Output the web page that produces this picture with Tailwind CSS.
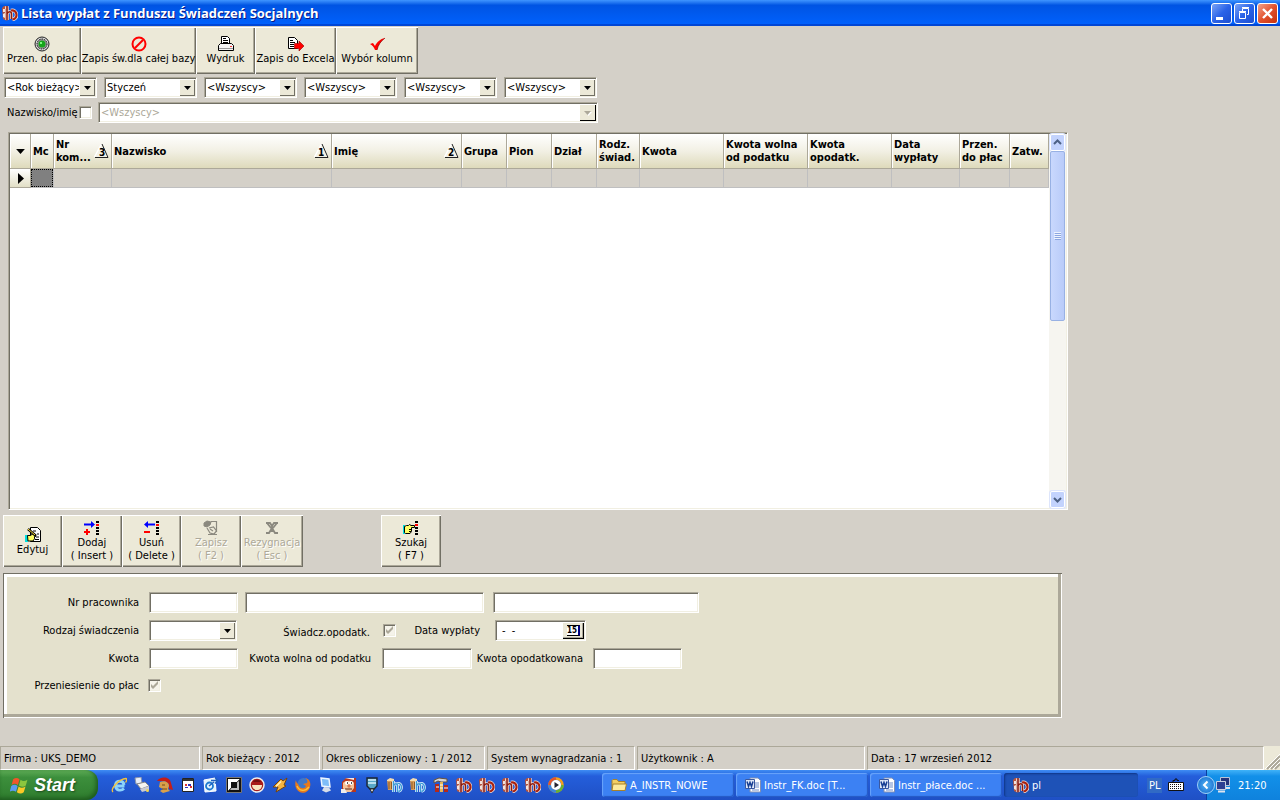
<!DOCTYPE html>
<html lang="pl">
<head>
<meta charset="utf-8">
<title>Lista wypłat z Funduszu Świadczeń Socjalnych</title>
<script src="https://cdn.jsdelivr.net/npm/@tailwindcss/browser@4"></script>
</head>
<body class="flex min-h-screen flex-col bg-[#d4d0c8] font-['DejaVu_Sans_Condensed','DejaVu_Sans',sans-serif] text-[11px] leading-[13px] text-black">

<svg class="hidden" aria-hidden="true">
  <symbol id="app" viewBox="0 0 16 16">
    <path d="M0 3l2-2h3l2 2v12l-3 .5L1 14z" fill="#b5543f"/><path d="M1 4h2v3H1zM1 9l2-1v5l-2-1z" fill="#f3e3dc"/><path d="M3 2h2v2H3z" fill="#f0b8a8"/>
    <path d="M5 1v14M5 9c1-3 4.500-3 4.500 0v5" fill="none" stroke="#f3e6e0" stroke-width="3.200"/>
    <path d="M9 5.500c6-1.500 8 8 1.500 9" fill="none" stroke="#f3e6e0" stroke-width="3.600"/>
    <path d="M5 1v14M5 9c1-3 4.500-3 4.500 0v5" fill="none" stroke="#8c1c10" stroke-width="1.600"/>
    <path d="M9 5.500c6-1.500 8 8 1.500 9" fill="none" stroke="#a8210f" stroke-width="2.200"/>
  </symbol>
  <symbol id="bin" viewBox="0 0 16 16">
    <path d="M0 3h7l-1 10H1z" fill="#d99a55"/><path d="M0 3l3-2 4 1v2H0z" fill="#f5dcae"/><path d="M2 5v7M4.500 5v7" stroke="#8c5a28"/>
    <path d="M6.500 4v11M6.500 9c1-3 4-3 4 0v6M10.500 6.500c5-1 5 7 1 8" fill="none" stroke="#e9f6ff" stroke-width="2.800"/>
    <path d="M6.500 4v11M6.500 9c1-3 4-3 4 0v6M10.500 6.500c5-1 5 7 1 8" fill="none" stroke="#3d9ad6" stroke-width="1.400"/>
  </symbol>
  <symbol id="word" viewBox="0 0 16 16">
    <path d="M5 1h8l2.500 2.500V15H5z" fill="#fff" stroke="#7f8fb5"/><path d="M10 6h4M10 8h4M10 10h4M7 13h7" stroke="#6d8bc8"/>
    <path d="M.5 2.500h9v9h-9z" fill="#dfe8f8" stroke="#3a58a0"/><path d="M2 4.500l1.500 5L5 5.500l1.500 4 1.500-5" fill="none" stroke="#173f94" stroke-width="1.500"/>
  </symbol>
  <symbol id="dots" viewBox="0 0 16 16">
    <path d="M12 1h3v2h-3zM12 7h3v2h-3zM12 10h3v2h-3zM12 13h3v2h-3z" fill="#000"/><path d="M12 4h3v2h-3z" fill="#f00"/>
  </symbol>
  <symbol id="sort" viewBox="0 0 15 16">
    <path d="M8 1l6 13.500H1z" fill="#f4f2e6"/><path d="M.5 14L7.500 1" stroke="#fff" stroke-width="1.500"/><path d="M8 1l6 13.500H1" fill="none" stroke="#222"/>
  </symbol>
  <symbol id="check" viewBox="0 0 13 13"><path d="M3 5v3l2 2 5-5V2L5 7z" fill="#aca899"/></symbol>
  <symbol id="down" viewBox="0 0 7 4"><path d="M0 0h7L3.500 4z"/></symbol>
</svg>

<!-- Window caption -->
<header class="flex h-[26px] shrink-0 items-center bg-linear-to-b from-[#3f95ff] via-[#0054e3] via-20% to-[#0062ff] pl-[2px] pr-[2px] shadow-[inset_0_-2px_#0046d5]">
  <svg class="size-4 shrink-0"><use href="#app"/></svg>
  <h1 class="ml-[3px] flex-1 truncate font-['Open_Sans','Noto_Sans',sans-serif] text-[13px] leading-5 font-bold text-white [text-shadow:1px_1px_#0a1883]">Lista wypłat z Funduszu Świadczeń Socjalnych</h1>
  <div class="flex gap-[2px]">
    <button aria-label="Minimalizuj" class="size-[21px] rounded-[3px] border border-white bg-linear-to-br from-[#7ba2f5] via-[#2b63e8] to-[#1d4ed0]"><svg viewBox="0 0 19 19"><path d="M4 13h7v3H4z" fill="#fff"/></svg></button>
    <button aria-label="Przywróć" class="size-[21px] rounded-[3px] border border-white bg-linear-to-br from-[#7ba2f5] via-[#2b63e8] to-[#1d4ed0]"><svg viewBox="0 0 19 19" fill="none" stroke="#fff"><path d="M4.500 8.500h6v6h-6zM4 7.500h7M7.500 7V4.500h6v6H12M7 3.500h7"/></svg></button>
    <button aria-label="Zamknij" class="size-[21px] rounded-[3px] border border-white bg-linear-to-br from-[#f0a088] via-[#e2512c] to-[#c73008]"><svg viewBox="0 0 19 19"><path d="M5 5l9 9M14 5l-9 9" stroke="#fff" stroke-width="2.400"/></svg></button>
  </div>
</header>

<main class="flex flex-1 flex-col">
  <!-- Toolbar -->
  <div class="flex h-[48px] pl-[3px] pt-px whitespace-nowrap">
    <button class="flex w-[78px] flex-col items-center bg-[#ece9d8] pt-[9px] shadow-[inset_1px_1px_#fff,inset_-1px_-1px_#716f64,inset_-2px_-2px_#aca899]">
      <svg class="size-4" viewBox="0 0 16 16"><circle cx="8" cy="8" r="7" fill="#d8d8d8" stroke="#222"/><circle cx="8" cy="8" r="5" fill="#999" stroke="#111" stroke-dasharray="1.500 1"/><circle cx="8" cy="8" r="3.500" fill="#17a51c"/><path d="M6 6h2v2H6z" fill="#7dfa7d"/></svg>Przen. do płac</button>
    <button class="flex w-[115px] flex-col items-center bg-[#ece9d8] pt-[9px] shadow-[inset_1px_1px_#fff,inset_-1px_-1px_#716f64,inset_-2px_-2px_#aca899]">
      <svg class="size-4" viewBox="0 0 16 16" fill="none" stroke="#f00" stroke-width="2"><circle cx="8" cy="8" r="6.500"/><path d="M12 4l-8 8"/></svg>Zapis św.dla całej bazy</button>
    <button class="flex w-[59px] flex-col items-center bg-[#ece9d8] pt-[9px] shadow-[inset_1px_1px_#fff,inset_-1px_-1px_#716f64,inset_-2px_-2px_#aca899]">
      <svg class="size-4" viewBox="0 0 16 16"><path d="M3.500 8V.5h6l2 2V8" fill="#fff" stroke="#000"/><path d="M5 2.500h3M5 4.500h5M5 6.500h5" stroke="#000"/><path d="M2.500 7.500h11l2 2v5H.5v-5z" fill="#f4f4f4" stroke="#000"/><path d="M3 7.500h10" stroke="#000"/><path d="M1 12.500h14" stroke="#999"/><path d="M12 10h2v1h-2z" fill="#f33"/></svg>Wydruk</button>
    <button class="flex w-[81px] flex-col items-center bg-[#ece9d8] pt-[9px] shadow-[inset_1px_1px_#fff,inset_-1px_-1px_#716f64,inset_-2px_-2px_#aca899]">
      <svg class="size-4" viewBox="0 0 16 16"><path d="M.5 1.500h6l3 3v8h-9z" fill="#fff" stroke="#000"/><path d="M2 4.500h3M2 6.500h5M2 8.500h4M2 10.500h4" stroke="#000"/><path d="M6.500 7.500H11V5l5 5-5 5v-2.500H6.500z" fill="#f00" stroke="#900" stroke-width=".6"/></svg>Zapis do Excela</button>
    <button class="flex w-[82px] flex-col items-center bg-[#ece9d8] pt-[9px] shadow-[inset_1px_1px_#fff,inset_-1px_-1px_#716f64,inset_-2px_-2px_#aca899]">
      <svg class="size-4" viewBox="0 0 16 16"><path d="M1 8l3-1 2 3c2-4 5-7 10-8-4 3-7 7-8 12H6C5 11 3 9 1 8z" fill="#f00"/><path d="M8 14c1-5 4-9 8-12" fill="none" stroke="#800" stroke-width=".7"/></svg>Wybór kolumn</button>
  </div>

  <!-- Filters -->
  <div class="mt-[3px] flex gap-[7px] pl-1">
    <div class="relative h-[21px] w-[93px]"><select aria-label="Rok" class="h-full w-full appearance-none border border-t-[#aca899] border-l-[#aca899] border-r-white border-b-white bg-white pl-[2px] pr-[17px] shadow-[inset_1px_1px_#716f64,inset_-1px_-1px_#f1efe2]"><option>&lt;Rok bieżący&gt;</option></select><span class="pointer-events-none absolute top-[2px] right-[2px] grid h-[17px] w-4 place-items-center bg-[#ece9d8] shadow-[inset_1px_1px_#fff,inset_-1px_-1px_#716f64]"><svg class="h-1 w-[7px]"><use href="#down"/></svg></span></div>
    <div class="relative h-[21px] w-[93px]"><select aria-label="Miesiąc" class="h-full w-full appearance-none border border-t-[#aca899] border-l-[#aca899] border-r-white border-b-white bg-white pl-[2px] pr-[17px] shadow-[inset_1px_1px_#716f64,inset_-1px_-1px_#f1efe2]"><option>Styczeń</option></select><span class="pointer-events-none absolute top-[2px] right-[2px] grid h-[17px] w-4 place-items-center bg-[#ece9d8] shadow-[inset_1px_1px_#fff,inset_-1px_-1px_#716f64]"><svg class="h-1 w-[7px]"><use href="#down"/></svg></span></div>
    <div class="relative h-[21px] w-[93px]"><select aria-label="Grupa" class="h-full w-full appearance-none border border-t-[#aca899] border-l-[#aca899] border-r-white border-b-white bg-white pl-[2px] pr-[17px] shadow-[inset_1px_1px_#716f64,inset_-1px_-1px_#f1efe2]"><option>&lt;Wszyscy&gt;</option></select><span class="pointer-events-none absolute top-[2px] right-[2px] grid h-[17px] w-4 place-items-center bg-[#ece9d8] shadow-[inset_1px_1px_#fff,inset_-1px_-1px_#716f64]"><svg class="h-1 w-[7px]"><use href="#down"/></svg></span></div>
    <div class="relative h-[21px] w-[93px]"><select aria-label="Pion" class="h-full w-full appearance-none border border-t-[#aca899] border-l-[#aca899] border-r-white border-b-white bg-white pl-[2px] pr-[17px] shadow-[inset_1px_1px_#716f64,inset_-1px_-1px_#f1efe2]"><option>&lt;Wszyscy&gt;</option></select><span class="pointer-events-none absolute top-[2px] right-[2px] grid h-[17px] w-4 place-items-center bg-[#ece9d8] shadow-[inset_1px_1px_#fff,inset_-1px_-1px_#716f64]"><svg class="h-1 w-[7px]"><use href="#down"/></svg></span></div>
    <div class="relative h-[21px] w-[93px]"><select aria-label="Dział" class="h-full w-full appearance-none border border-t-[#aca899] border-l-[#aca899] border-r-white border-b-white bg-white pl-[2px] pr-[17px] shadow-[inset_1px_1px_#716f64,inset_-1px_-1px_#f1efe2]"><option>&lt;Wszyscy&gt;</option></select><span class="pointer-events-none absolute top-[2px] right-[2px] grid h-[17px] w-4 place-items-center bg-[#ece9d8] shadow-[inset_1px_1px_#fff,inset_-1px_-1px_#716f64]"><svg class="h-1 w-[7px]"><use href="#down"/></svg></span></div>
    <div class="relative h-[21px] w-[93px]"><select aria-label="Rodzaj" class="h-full w-full appearance-none border border-t-[#aca899] border-l-[#aca899] border-r-white border-b-white bg-white pl-[2px] pr-[17px] shadow-[inset_1px_1px_#716f64,inset_-1px_-1px_#f1efe2]"><option>&lt;Wszyscy&gt;</option></select><span class="pointer-events-none absolute top-[2px] right-[2px] grid h-[17px] w-4 place-items-center bg-[#ece9d8] shadow-[inset_1px_1px_#fff,inset_-1px_-1px_#716f64]"><svg class="h-1 w-[7px]"><use href="#down"/></svg></span></div>
  </div>
  <div class="mt-1 flex h-[21px] items-center pl-[7px]">
    <label for="byname" class="w-[72px] whitespace-nowrap">Nazwisko/imię</label>
    <input id="byname" type="checkbox" class="size-[13px] appearance-none border border-t-[#aca899] border-l-[#aca899] border-r-white border-b-white bg-white shadow-[inset_1px_1px_#716f64,inset_-1px_-1px_#f1efe2]">
    <div class="relative ml-[6px] h-[21px] w-[500px]"><select disabled aria-label="Pracownik" class="h-full w-full appearance-none border border-t-[#aca899] border-l-[#aca899] border-r-white border-b-white bg-white pl-[2px] text-[#aca899] opacity-100 shadow-[inset_1px_1px_#716f64,inset_-1px_-1px_#f1efe2]"><option>&lt;Wszyscy&gt;</option></select><span class="pointer-events-none absolute top-[2px] right-[2px] grid h-[17px] w-[17px] place-items-center bg-[#ece9d8] shadow-[inset_1px_1px_#fff,inset_-1px_-1px_#000]"><svg class="h-1 w-[7px] fill-[#aca899] drop-shadow-[1px_1px_#fff]"><use href="#down"/></svg></span></div>
  </div>

  <!-- Payments grid -->
  <section class="mt-[9px] ml-2 flex min-h-[200px] max-w-[1060px] flex-1 border border-t-[#aca899] border-l-[#aca899] border-r-white border-b-white bg-white p-px shadow-[inset_1px_1px_#716f64,inset_-1px_-1px_#f1efe2]">
    <div class="min-w-0 flex-1 overflow-hidden">
    <table class="w-[1039px] table-fixed border-separate border-spacing-0 text-left">
      <colgroup><col class="w-[21px]"><col class="w-[23px]"><col class="w-[58px]"><col class="w-[220px]"><col class="w-[130px]"><col class="w-[45px]"><col class="w-[45px]"><col class="w-[45px]"><col class="w-[43px]"><col class="w-[84px]"><col class="w-[84px]"><col class="w-[84px]"><col class="w-[68px]"><col class="w-[50px]"><col class="w-[39px]"></colgroup>
      <thead class="[&_th]:h-[35px] [&_th]:border-r [&_th]:border-b [&_th]:border-[#aca899] [&_th]:bg-linear-to-b [&_th]:from-white [&_th]:via-[#f2f0e4] [&_th]:to-[#dedabb] [&_th]:p-0 [&_th]:pl-[2px] [&_th]:font-bold [&_th]:whitespace-nowrap [&_th]:shadow-[inset_1px_0_#fff]">
        <tr>
          <th aria-label="Menu"><svg class="ml-1 h-[5px] w-[9px]"><use href="#down"/></svg></th>
          <th>Mc</th>
          <th><div class="flex items-center justify-between pr-[2px]"><span>Nr<br>kom...</span><svg class="h-4 w-[15px]" viewBox="0 0 15 16"><use href="#sort"/><text x="5" y="13" font-size="10">3</text></svg></div></th>
          <th><div class="flex items-center justify-between pr-[2px]"><span>Nazwisko</span><svg class="h-4 w-[15px]" viewBox="0 0 15 16"><use href="#sort"/><text x="4" y="13" font-size="10">1</text></svg></div></th>
          <th><div class="flex items-center justify-between pr-[2px]"><span>Imię</span><svg class="h-4 w-[15px]" viewBox="0 0 15 16"><use href="#sort"/><text x="4" y="13" font-size="10">2</text></svg></div></th>
          <th>Grupa</th><th>Pion</th><th>Dział</th><th>Rodz.<br>świad.</th><th>Kwota</th><th>Kwota wolna<br>od podatku</th><th>Kwota<br>opodatk.</th><th>Data<br>wypłaty</th><th>Przen.<br>do płac</th><th>Zatw.</th>
        </tr>
      </thead>
      <tbody>
        <tr class="[&_td]:h-[19px] [&_td]:border-r [&_td]:border-b [&_td]:border-[#bfbfc0] [&_td]:bg-[#d4d0c8] [&_td]:p-0">
          <th class="border-r border-b border-[#aca899] bg-linear-to-b from-white to-[#e2dfc6] p-0"><svg class="ml-2 h-[11px] w-[6px]" viewBox="0 0 6 11"><path d="M0 0l6 5.500L0 11z"/></svg></th>
          <td><div class="h-[18px] border border-dotted border-black bg-[#808080]"></div></td>
          <td></td><td></td><td></td><td></td><td></td><td></td><td></td><td></td><td></td><td></td><td></td><td></td><td></td>
        </tr>
      </tbody>
    </table>
    </div>
    <div class="flex w-[17px] flex-col items-center bg-[#f6f5f0]">
      <button aria-label="W górę" class="h-[17px] w-[15px] rounded-[2px] border border-white bg-[#c3d3fd] shadow-[0_0_0_1px_#dde5fb]"><svg viewBox="0 0 13 15"><path d="M3 9l3.500-3.500L10 9" fill="none" stroke="#4d6185" stroke-width="2"/></svg></button>
      <div class="grid h-[170px] w-[15px] place-items-center rounded-[2px] border border-[#98b1e4] bg-linear-to-r from-[#c9d8fd] to-[#b9cbf9]"><svg class="h-2 w-[7px]" viewBox="0 0 7 8"><path d="M0 .5h7M0 2.500h7M0 4.500h7M0 6.500h7" stroke="#eef4fe"/><path d="M1 1.500h6M1 3.500h6M1 5.500h6M1 7.500h6" stroke="#8ca6e0"/></svg></div>
      <button aria-label="W dół" class="mt-auto h-[17px] w-[15px] rounded-[2px] border border-white bg-[#c3d3fd] shadow-[0_0_0_1px_#dde5fb]"><svg viewBox="0 0 13 15"><path d="M3 6l3.500 3.500L10 6" fill="none" stroke="#4d6185" stroke-width="2"/></svg></button>
    </div>
  </section>

  <!-- Record actions -->
  <div class="mt-[5px] flex h-[52px] pl-[3px] whitespace-nowrap">
    <button class="flex w-[59px] flex-col items-center justify-center bg-[#ece9d8] shadow-[inset_1px_1px_#fff,inset_-1px_-1px_#716f64,inset_-2px_-2px_#aca899]"><svg class="size-4" viewBox="0 0 16 16"><path d="M5.500.5h7l3 3v11h-10z" fill="#fff" stroke="#000"/><path d="M8 4h3M12 7h2M11 10h3M10 12.500h4" stroke="#000"/><path d="M0 8h3v7H0z" fill="#0dd"/><path d="M2.500 8.500h3l2-1.500 3 1v1.500L9 10l1 1-2 3H3z" fill="#ff6" stroke="#000"/><path d="M3 2l8 7" stroke="#000" stroke-width="2.500"/><path d="M3 2l7 6" stroke="#fd3"/></svg>Edytuj</button>
    <button class="flex w-[60px] flex-col items-center justify-center bg-[#ece9d8] shadow-[inset_1px_1px_#fff,inset_-1px_-1px_#716f64,inset_-2px_-2px_#aca899]"><svg class="size-4" viewBox="0 0 16 16"><use href="#dots"/><path d="M0 3.500h7V1l4 3.500L7 8V5.500H0z" fill="#00f"/><path d="M0 11h2V9h2v2h2v2H4v2H2v-2H0z" fill="#f00"/></svg>Dodaj<br>( Insert )</button>
    <button class="flex w-[59px] flex-col items-center justify-center bg-[#ece9d8] shadow-[inset_1px_1px_#fff,inset_-1px_-1px_#716f64,inset_-2px_-2px_#aca899]"><svg class="size-4" viewBox="0 0 16 16"><use href="#dots"/><path d="M11 3.500H4V1L0 4.500 4 8V5.500h7z" fill="#00f"/><path d="M0 11h6v2H0z" fill="#f00"/></svg>Usuń<br>( Delete )</button>
    <button disabled class="flex w-[60px] flex-col items-center justify-center bg-[#ece9d8] text-[#aca899] [text-shadow:1px_1px_#fff] shadow-[inset_1px_1px_#fff,inset_-1px_-1px_#716f64,inset_-2px_-2px_#aca899]"><svg class="size-4" viewBox="0 0 16 16" fill="none" stroke="#8b897f"><path d="M1 3l3-2 4 1-1 3-3 2-3-1z" fill="#8b897f"/><path d="M8 1.500h5.500V12M4 8l3 5 4 1 2.500-3-3-4-4.500 1M7 9l3 2M5 14.500h9" stroke-width="1.200"/></svg>Zapisz<br>( F2 )</button>
    <button disabled class="flex w-[62px] flex-col items-center justify-center bg-[#ece9d8] text-[#aca899] [text-shadow:1px_1px_#fff] shadow-[inset_1px_1px_#fff,inset_-1px_-1px_#716f64,inset_-2px_-2px_#aca899]"><svg class="size-4" viewBox="0 0 16 16"><path d="M2 3h4l2 3 2-3h4M8 6v6M2 13h3l3-5 3 5h3M3 3l4 5M13 3L9 8" fill="none" stroke="#8b897f" stroke-width="1.800"/></svg>Rezygnacja<br>( Esc )</button>
    <button class="ml-[78px] flex w-[60px] flex-col items-center justify-center bg-[#ece9d8] shadow-[inset_1px_1px_#fff,inset_-1px_-1px_#716f64,inset_-2px_-2px_#aca899]"><svg class="size-4" viewBox="0 0 16 16"><use href="#dots"/><path d="M0 5h2v9H0z" fill="#0dd"/><path d="M1.500 6.500l2-1h2l1-1 1.500 1h3.500v2H8.500v4l-1.500 2H2.500l-1-1z" fill="#ff6" stroke="#000"/><path d="M6 9.500h3M6 11.500h2" stroke="#000"/></svg>Szukaj<br>( F7 )</button>
  </div>

  <!-- Record form -->
  <form class="mt-[6px] mb-7 ml-[3px] max-w-[1059px] bg-[#e4e1cd] shadow-[inset_1px_1px_#716f64,inset_-1px_-1px_#fff,inset_-4px_-4px_#aca899,inset_4px_4px_#fff]">
    <div class="flex h-[145px] flex-col gap-[7px] pt-[19px] whitespace-nowrap [&_input:not([type=checkbox])]:h-[21px] [&_input]:border [&_input]:border-t-[#aca899] [&_input]:border-l-[#aca899] [&_input]:border-r-white [&_input]:border-b-white [&_input]:shadow-[inset_1px_1px_#716f64,inset_-1px_-1px_#f1efe2]">
      <div class="flex items-center">
        <label for="nr" class="w-[136px] text-right">Nr pracownika</label><input id="nr" class="ml-[10px] w-[89px] bg-white px-1">
        <input aria-label="Nazwisko" class="ml-[7px] w-[239px] bg-white px-1"><input aria-label="Imię" class="ml-[9px] w-[206px] bg-white px-1">
      </div>
      <div class="flex h-[21px] items-center">
        <label for="kind" class="w-[136px] text-right">Rodzaj świadczenia</label>
        <div class="relative ml-[10px] h-[21px] w-[88px]"><select id="kind" class="h-full w-full appearance-none border border-t-[#aca899] border-l-[#aca899] border-r-white border-b-white bg-white pl-[3px] shadow-[inset_1px_1px_#716f64,inset_-1px_-1px_#f1efe2]"><option></option></select><span class="pointer-events-none absolute top-[2px] right-[2px] grid h-[17px] w-4 place-items-center bg-[#ece9d8] shadow-[inset_1px_1px_#fff,inset_-1px_-1px_#716f64]"><svg class="h-1 w-[7px]"><use href="#down"/></svg></span></div>
        <label for="taxed" class="w-[133px] pt-[3px] text-right">Świadcz.opodatk.</label>
        <span class="relative ml-[13px] size-[13px]"><input id="taxed" type="checkbox" checked disabled class="block size-[13px] appearance-none bg-[#f5f3ea]"><svg class="pointer-events-none absolute inset-0 size-[13px]"><use href="#check"/></svg></span>
        <label for="date" class="w-[84px] text-right">Data wypłaty</label>
        <div class="relative ml-[15px] w-[91px]"><input id="date" value="-  -" class="block w-full bg-white pl-[6px]"><button type="button" aria-label="Kalendarz" class="absolute top-[2px] right-[2px] grid h-[17px] w-[22px] place-items-center bg-[#ece9d8] shadow-[inset_1px_1px_#fff,inset_-1px_-1px_#000,inset_-2px_-2px_#aca899]"><span class="h-[11px] w-[13px] border-y border-r-2 border-y-black border-r-[#000080] bg-white text-center text-[8px] leading-[9px] font-bold">15</span></button></div>
      </div>
      <div class="flex items-center">
        <label for="amount" class="w-[136px] text-right">Kwota</label><input id="amount" class="ml-[10px] w-[89px] bg-white px-1">
        <label for="free" class="w-[133px] text-right">Kwota wolna od podatku</label><input id="free" class="ml-[11px] w-[90px] bg-white px-1">
        <label for="taxable" class="w-[111px] text-right">Kwota opodatkowana</label><input id="taxable" class="ml-[10px] w-[89px] bg-white px-1">
      </div>
      <div class="flex h-[19px] items-center">
        <label for="moved" class="w-[136px] text-right">Przeniesienie do płac</label>
        <span class="relative ml-[9px] size-[13px]"><input id="moved" type="checkbox" checked disabled class="block size-[13px] appearance-none bg-[#f5f3ea]"><svg class="pointer-events-none absolute inset-0 size-[13px]"><use href="#check"/></svg></span>
      </div>
    </div>
  </form>
</main>

<!-- Status bar -->
<div role="status" class="flex h-6 shrink-0 gap-[2px] whitespace-nowrap [&>p]:border [&>p]:border-t-[#aca899] [&>p]:border-l-[#aca899] [&>p]:border-r-white [&>p]:border-b-white [&>p]:pt-[5px] [&>p]:pl-[3px]">
  <p class="w-[200px]">Firma : UKS_DEMO</p>
  <p class="w-[118px]">Rok bieżący : 2012</p>
  <p class="w-[163px]">Okres obliczeniowy : 1 / 2012</p>
  <p class="w-[148px]">System wynagradzania : 1</p>
  <p class="w-[228px]">Użytkownik : A</p>
  <p class="flex-1">Data : 17 wrzesień 2012</p>
  <svg class="-ml-[2px] h-6 w-4 bg-[#ece9d8]" viewBox="0 0 16 24"><path d="M3 23L16 10M7 23l9-9M11 23l5-5" stroke="#aca899" stroke-width="2"/><path d="M1 23L16 8M5 23l11-11M9 23l7-7" stroke="#fff"/></svg>
</div>

<!-- Taskbar -->
<nav class="flex h-[30px] shrink-0 items-stretch bg-linear-to-b from-[#3f8cf3] via-[#245edb] via-20% to-[#1f50c5] text-white">
  <button class="flex w-[98px] items-center rounded-r-[12px] bg-linear-to-b from-[#5eac56] via-[#3c8f3c] via-25% to-[#2f7d2e] pl-[10px] shadow-[inset_-2px_-2px_4px_#1d5a1d]">
    <svg class="h-[19px] w-[19px]" viewBox="0 0 18 18"><path d="M3 3c2-1.500 4-1.500 6 0L7.500 8.500c-2-1.500-4-1.500-6 0z" fill="#f0562a"/><path d="M10 3.500c2 1.500 4 1.500 6.500 0L15 9c-2 1.500-4 1.500-6.500 0z" fill="#8cc63e"/><path d="M1.200 9.500c2-1.500 4-1.500 6 0L5.700 15c-2-1.500-4-1.500-6 0z" fill="#5b9bf0"/><path d="M8.200 10c2 1.500 4 1.500 6.500 0L13 15.500c-2 1.500-4 1.500-6.500 0z" fill="#fbc926"/></svg>
    <span class="ml-[5px] font-['Liberation_Sans',Arial,sans-serif] text-[18px] leading-5 font-bold italic [text-shadow:1px_1px_2px_#1b4b1b]">Start</span>
  </button>
  <div class="ml-[13px] flex items-center gap-[7px] [&_svg]:size-4">
    <svg viewBox="0 0 16 16"><path d="M13.500 9H4.500c.5 5 6 5 8.500 2.500M4.500 8c.5-5 8-5 8.500 0" fill="none" stroke="#8cd4fb" stroke-width="2.800"/><path d="M2 15C-1 12 8 2 15 1.500c1 0 1 2-.5 4" fill="none" stroke="#f3c33c" stroke-width="1.300"/></svg>
    <svg viewBox="0 0 16 16"><path d="M1 1l6-1 1 6-6 1z" fill="#e8eef8" stroke="#8a96ac"/><path d="M3 7l8-2 4 4-8 3z" fill="#f5f5f0" stroke="#888"/><path d="M6 12l9-3v4l-7 2z" fill="#c9cbd2"/><circle cx="13.500" cy="13.500" r="1.500" fill="#f2d650"/></svg>
    <svg viewBox="0 0 16 16"><path d="M0 4c3-5 13-5 14 2l2 7-4-1V7L8 4z" fill="#c61d16"/><path d="M3 5c4-2 9 0 9 4l-1 3 2 2-7 2-3-2 3-2-4-2z" fill="#d9a04a"/><path d="M5 8h3M5 12h5" stroke="#7a4a18"/></svg>
    <svg viewBox="0 0 16 16"><path d="M2.500 1.500h11v13h-11z" fill="#fff" stroke="#222"/><path d="M3 3h10" stroke="#333" stroke-width="2"/><path d="M5 7h2v2H5zM10 9h2v2h-2z" fill="#d33"/><path d="M8 7h3v2H8zM5 10h3v1H5z" fill="#33b"/></svg>
    <svg viewBox="0 0 16 16"><path d="M1 3l11-2 1 13-11 1z" fill="#e3f4fe" stroke="#fff"/><circle cx="6.500" cy="9" r="3.500" fill="none" stroke="#1f7bd0" stroke-width="1.800"/><path d="M8 3.500h7l-3-3m3 3l-3 3M6 9l5-4" fill="none" stroke="#2060c0" stroke-width="1.500"/></svg>
    <svg viewBox="0 0 16 16"><path d="M.5.5h15v15H.5z" fill="#111" stroke="#777"/><path d="M2 2h12L2 14z" fill="#fff"/><path d="M14 2v12H2z" fill="#111"/><path d="M5 5h6v6H5z" fill="#111"/><path d="M11 11V5.500L13 4v9H4l1.500-2z" fill="#bbb"/></svg>
    <svg viewBox="0 0 16 16"><circle cx="8" cy="8" r="7" fill="#a81c1a" stroke="#eee" stroke-width="1.500"/><path d="M3 8h10c0 3-2 5-5 5s-5-2-5-5z" fill="#f8e6c0"/><path d="M4 5c2-3 6-3 8 0z" fill="#701010"/></svg>
    <svg viewBox="0 0 16 16"><path d="M1 10l8-8 2 2 4-3-3 7 2 1-10 6 2-5z" fill="#f7b541" stroke="#74420d"/><path d="M4 9.500l5-5" stroke="#fff3c0" stroke-width="1.500"/></svg>
    <svg viewBox="0 0 16 16"><circle cx="8.500" cy="7" r="6" fill="#3f78c8"/><path d="M1 3c0 3 2 3 3 6 2 3 6 3 7 0l-3-2 4-1c1-2 0-4-2-5 5 1 6 5 5 9-2 7-11 8-14 1-1-3-1-6 0-8z" fill="#e8791b"/><path d="M2 9c2 5 8 6 12 1" fill="none" stroke="#fbc13a" stroke-width="1.300"/></svg>
    <svg viewBox="0 0 16 16"><path d="M3 1l8 1 1 8-8-1z" fill="#7fbdf8" stroke="#edf5ff" stroke-width="1.500"/><path d="M6 10l5 .5 2 3-5 2-4-2z" fill="#d7dde8"/></svg>
    <svg viewBox="0 0 16 16"><path d="M1 5l4-4 10 0v14H1z" fill="#b8361c"/><path d="M2 6c2-3 10-3 11 0v5l-3 4H5l-3-4z" fill="#f3c49a"/><circle cx="6" cy="6" r="2" fill="#fff"/><circle cx="10" cy="6" r="2" fill="#fff"/><path d="M6 6h1M10 6h1" stroke="#222" stroke-width="1.500"/><circle cx="8" cy="9" r="1.700" fill="#d87850"/><path d="M4 12h7" stroke="#5a2412"/><path d="M0 12h4l2 4H0zM4 1h9v2z" fill="#eee"/></svg>
    <svg viewBox="0 0 16 16"><path d="M3 1h10v8l-3 3H6L3 9z" fill="#58a7c8" stroke="#1b2533" stroke-width="1.400"/><path d="M4 3h8M4 6h8" stroke="#d9f2fb" stroke-width="1.400"/><path d="M6 12h4l-2 4z" fill="#fff" stroke="#222"/></svg>
    <svg><use href="#bin"/></svg><svg><use href="#bin"/></svg>
    <svg viewBox="0 0 16 16"><path d="M1 3l5-2 8 1v3H8L5 4 1 6z" fill="#d3d6da" stroke="#66513b"/><path d="M7 5h3v10H7z" fill="#e6b757"/><path d="M2 7h4v8H2zM11 8h4v7h-4z" fill="#b3291b"/><path d="M3 10h3M11 11h4M7 8h3M7 11h3" stroke="#fff"/></svg>
    <svg><use href="#app"/></svg><svg><use href="#app"/></svg><svg><use href="#app"/></svg><svg><use href="#app"/></svg>
    <svg viewBox="0 0 16 16"><circle cx="8" cy="8" r="6.500" fill="none" stroke="#f3a01d" stroke-width="2.500"/><path d="M8 1.500A6.500 6.500 0 0 0 1.500 8" fill="none" stroke="#e4532b" stroke-width="2.500"/><path d="M1.500 8A6.500 6.500 0 0 0 8 14.500" fill="none" stroke="#3b86dd" stroke-width="2.500"/><path d="M8 14.500A6.500 6.500 0 0 0 14.500 8" fill="none" stroke="#66b332" stroke-width="2.500"/><circle cx="8" cy="8" r="5" fill="#fff"/><path d="M6.500 5v6l4.500-3z" fill="#223"/></svg>
  </div>
  <div class="ml-auto flex items-center gap-[2px] pr-[9px] whitespace-nowrap [&_svg]:size-4">
    <button class="flex h-6 w-[132px] items-center gap-[3px] rounded-[3px] bg-[#3c81f3] pl-[9px] shadow-[inset_1px_1px_1px_#6aa5fb,inset_-1px_-1px_1px_#2458c4]"><svg viewBox="0 0 16 16"><path d="M1 3.500l1-1h4l1.500 2H14v9H1z" fill="#f3cf63" stroke="#a8812a"/><path d="M1 13.500l1-6.500h13.500L14 13.500z" fill="#fdeb9e" stroke="#a8812a"/></svg>A_INSTR_NOWE</button>
    <button class="flex h-6 w-[132px] items-center gap-[3px] rounded-[3px] bg-[#3c81f3] pl-[9px] shadow-[inset_1px_1px_1px_#6aa5fb,inset_-1px_-1px_1px_#2458c4]"><svg><use href="#word"/></svg>Instr_FK.doc [T...</button>
    <button class="flex h-6 w-[132px] items-center gap-[3px] rounded-[3px] bg-[#3c81f3] pl-[9px] shadow-[inset_1px_1px_1px_#6aa5fb,inset_-1px_-1px_1px_#2458c4]"><svg><use href="#word"/></svg>Instr_płace.doc ...</button>
    <button class="flex h-6 w-[134px] items-center gap-[3px] rounded-[3px] bg-[#1e52b7] pl-[9px] shadow-[inset_1px_1px_2px_#0f3586]"><svg><use href="#app"/></svg>pl</button>
  </div>
  <div class="flex w-[59px] items-center gap-[6px]">
    <span class="bg-[#316ac5] px-[2px] py-[1px]">PL</span>
    <svg class="h-[14px] w-4" viewBox="0 0 16 14"><path d="M5 4V2.500h2V1h2v1.500h2" fill="none" stroke="#111"/><path d="M.5 4.500h15v8H.5z" fill="#fff" stroke="#111"/><path d="M2 6.500h12M2 8.500h12M2 10.500h12" stroke="#111" stroke-dasharray="1 1"/></svg>
  </div>
  <div class="flex w-[74px] items-center border-l border-[#0a3f9e] bg-linear-to-b from-[#3fb2f8] via-[#1290e9] via-20% to-[#0f82dd]">
    <button aria-label="Pokaż ukryte ikony" class="-ml-[10px] grid size-[18px] shrink-0 place-items-center rounded-full border border-[#9fd3f8] bg-radial from-[#52b4f5] to-[#0d62c8]"><svg class="size-[10px]" viewBox="0 0 10 10"><path d="M6.500 1.500L3 5l3.500 3.500" fill="none" stroke="#fff" stroke-width="2"/></svg></button>
    <svg class="size-4 shrink-0" viewBox="0 0 16 16"><path d="M5.500.5h9v8h-9z" fill="#24347c" stroke="#b9c4d8"/><path d="M1.500 4.500h9v8h-9z" fill="#2d3f92" stroke="#c8d0e0"/><path d="M3 14.500h7M11 11h4" stroke="#dfe4ee" stroke-width="2"/></svg>
    <time class="ml-[7px]">21:20</time>
  </div>
</nav>
</body>
</html>
